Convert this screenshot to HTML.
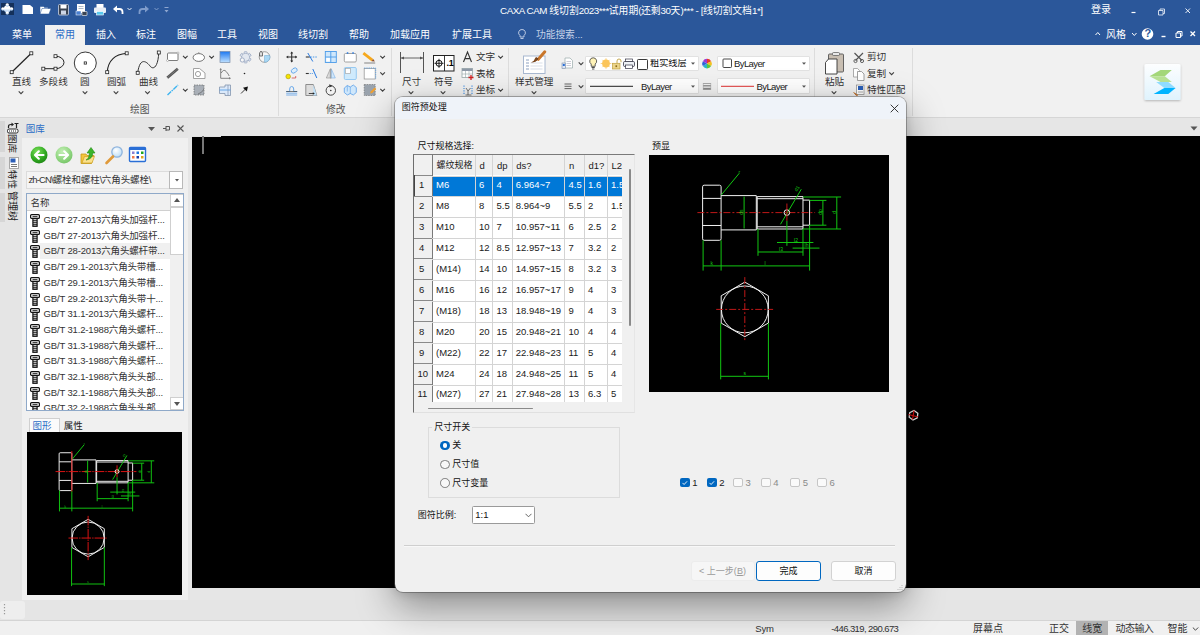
<!DOCTYPE html>
<html lang="zh-CN">
<head>
<meta charset="utf-8">
<title>CAXA CAM 线切割2023</title>
<style>
*{box-sizing:border-box;margin:0;padding:0}
html,body{width:1200px;height:635px;overflow:hidden;background:#e6e6e6}
body{font-family:"Liberation Sans","Noto Sans CJK SC",sans-serif;font-size:11px;color:#1a1a1a;position:relative}
.abs{position:absolute}
.t{position:absolute;white-space:nowrap;line-height:1}
#hdr{left:0;top:0;width:1200px;height:45px;background:#2b579a}
#hdr .t{color:#fff}
.ls{letter-spacing:-0.450px}
#hdr .tab{top:29.500px;font-size:10px}
#ribbon{left:0;top:45px;width:1200px;height:73px;background:#f1f1f1;border-bottom:1px solid #d6d6d6}
.gsep{position:absolute;top:3px;width:1px;height:68px;background:#dcdcdc}
.glabel{position:absolute;top:58px;font-size:9.800px;color:#555;line-height:1;white-space:nowrap}
.rl{position:absolute;font-size:9.600px;color:#333;line-height:1;white-space:nowrap}
.cmb{position:absolute;height:15.500px;background:#fff;border:1px solid #e2e2e2;border-radius:1px}
.chev{position:absolute;width:7px;height:4px}
#canvas{left:192px;top:136px;width:1008px;height:452px;background:#000}
#status{left:0;top:620px;width:1200px;height:15px;background:#f0f0f0;border-top:1px solid #d4d4d4}
#status .t{font-size:10px;color:#333;top:2.500px}

/* left panel */
#vtabs{left:0;top:119px;width:22px;height:481px;background:#e5e5e5}
.vt{position:absolute;left:0;width:5px;background:#d6d6d6}
.vtx{position:absolute;left:7px;width:11px;font-size:9.5px;line-height:11px;color:#222;writing-mode:vertical-rl;text-orientation:sideways;white-space:nowrap;letter-spacing:0}
#lp{left:22px;top:119px;width:166px;height:481px;background:#f0f0f0}
#lphead{left:0;top:0;width:166px;height:19px;background:#e5e5e5}
#pathbox{left:4px;top:52px;width:157px;height:18px;background:#f4f4f4;border:1px solid #dcdcdc}
#pathbtn{left:147px;top:52px;width:14px;height:18px;background:#fff;border:1px solid #b9b9b9}
#list{left:4px;top:74px;width:158px;height:218px;background:#fff;border:1px solid #8fa9c9;overflow:hidden}
#list .hd{position:absolute;left:0;top:0;width:143px;height:17px;background:#f0f0f0;border-bottom:1px solid #d0d0d0}
#list .row{position:absolute;left:0;width:143px;height:16px}
#list .row .t{left:16.500px;top:3px;font-size:9.500px;color:#333;letter-spacing:-0.150px}
#list .sb{position:absolute;left:143px;top:0;width:14px;height:216px;background:#f0f0f0}
#prev2{left:4.500px;top:313px;width:155.500px;height:162.500px;background:#000}
/* dialog */
.ct{font-size:9.500px;color:#1a1a1a}
.btn{height:19.800px;border:1px solid #d2d2d2;border-radius:3px;background:#fdfdfd;font-size:9px;line-height:18px;text-align:center;color:#111;white-space:nowrap}

#dlg{left:395px;top:96.500px;width:510.500px;height:495px;background:#f0f0f0;border-radius:8px;box-shadow:0 14px 38px rgba(0,0,0,.40),0 2px 10px rgba(0,0,0,.12),0 0 0 1px rgba(110,110,110,.5);overflow:hidden}
#dlgtitle{left:0;top:0;width:511px;height:22.500px;background:#eff3f9}
</style>
</head>
<body>
<!-- HEADER -->
<div id="hdr" class="abs">
  <!-- app icon -->
  <div class="abs" style="left:1px;top:3px;width:12.500px;height:12px;background:#14305a"></div>
  <svg class="abs" style="left:1px;top:3px" width="12.500" height="12" viewBox="0 0 12.500 12"><defs><linearGradient id="appg" x1="0" y1="0" x2="0" y2="1"><stop offset="0.400" stop-color="#ffffff"/><stop offset="1" stop-color="#9fc4ee"/></linearGradient></defs><g fill="url(#appg)"><circle cx="6.250" cy="6" r="3.400"/><circle cx="6.250" cy="2" r="1.700"/><circle cx="6.250" cy="10" r="1.700"/><circle cx="1.900" cy="6" r="1.700"/><circle cx="10.600" cy="6" r="1.700"/></g></svg>
  <!-- quick access -->
  <svg class="abs" style="left:20px;top:2px" width="160" height="16" viewBox="0 0 160 16">
    <path d="M2.500 3h7.500l3 2.500v6.500H2.500z" fill="#fff"/>
    <path d="M20 12l2-5.500h9L29 12zM20 12V4.500h3.500l1 1H28v1" fill="#fff" stroke="#2b579a" stroke-width="0.500"/>
    <rect x="38.500" y="2.500" width="10" height="10.500" rx="1" fill="#3a4352" stroke="#cdd6e6" stroke-width="0.800"/><rect x="40.500" y="3" width="6" height="3.500" fill="#fff"/><rect x="41" y="8.500" width="5" height="4" fill="#cdd6e6"/>
    <rect x="57" y="2" width="8" height="9" fill="#fff"/><path d="M58.500 4.500h5M58.500 6.500h5" stroke="#9ab" stroke-width="0.800"/><rect x="56" y="9" width="5" height="4" fill="#4a7fd0" stroke="#fff" stroke-width="0.500"/><rect x="62" y="9.500" width="5" height="4" rx="0.500" fill="#3a4352" stroke="#fff" stroke-width="0.600"/>
    <rect x="76.500" y="2" width="7" height="4" fill="#fff"/><rect x="74" y="5.500" width="12" height="5.500" rx="1" fill="#e9eef6"/><rect x="76.500" y="9.500" width="7" height="3.500" fill="#58c8ee" stroke="#fff" stroke-width="0.600"/>
    <path d="M94.500 7h5q3 0 3 3v2" fill="none" stroke="#fff" stroke-width="1.800"/><path d="M93 7l4-3.500v7z" fill="#fff"/>
    <path d="M107.500 6l2 2 2-2" fill="none" stroke="#e6ecf5" stroke-width="1"/>
    <path d="M127.500 7h-5q-3 0-3 3v2" fill="none" stroke="#7f9ccb" stroke-width="1.800"/><path d="M129 7l-4-3.500v7z" fill="#7f9ccb"/>
    <path d="M134.500 6l2 2 2-2" fill="none" stroke="#7f9ccb" stroke-width="1"/>
    <path d="M144.500 5.500h4" stroke="#8ea6d0" stroke-width="1"/><path d="M144.500 8h4l-2 2.500z" fill="#8ea6d0"/>
  </svg>
  <div class="t" id="ttl" style="left:500px;top:5.500px;font-size:9.800px"><span class="ls">CAXA CAM </span>线切割<span class="ls">2023***</span>试用期<span class="ls">(</span>还剩<span class="ls">30</span>天<span class="ls">)*** - [</span>线切割文档<span class="ls">1*]</span></div>
  <div class="t" style="left:1091px;top:5px;font-size:10px">登录</div>
  <svg class="abs" style="left:1125px;top:4px" width="75" height="14" viewBox="0 0 75 14">
    <path d="M6.500 8.500h4" stroke="#fff" stroke-width="1.200"/>
    <path d="M33.500 6.500h4.500v4.500h-4.500zM35 6.500v-1.500h4.500v4.500h-1.500" fill="none" stroke="#dfe7f3" stroke-width="0.900"/>
    <path d="M60.500 4.500l4.500 4.500M65 4.500l-4.500 4.500" stroke="#e8eef7" stroke-width="1"/>
  </svg>
  <!-- tabs -->
  <div class="abs" style="left:45px;top:25px;width:40px;height:21px;background:#f1f1f1"></div>
  <div class="t tab" style="left:55px;color:#2a6cc6">常用</div>
  <div class="t tab" style="left:12px">菜单</div><div class="t tab" style="left:96px">插入</div><div class="t tab" style="left:136px">标注</div><div class="t tab" style="left:177px">图幅</div><div class="t tab" style="left:217px">工具</div><div class="t tab" style="left:258px">视图</div><div class="t tab" style="left:298px">线切割</div><div class="t tab" style="left:349px">帮助</div><div class="t tab" style="left:390px">加载应用</div><div class="t tab" style="left:452px">扩展工具</div>
  <svg class="abs" style="left:517px;top:28px" width="10" height="13" viewBox="0 0 10 13"><path d="M5 1.500a3.300 3.300 0 0 1 2 6v1.500H3V7.500a3.300 3.300 0 0 1 2-6zM3.500 10.500h3" fill="none" stroke="#c9d5ea" stroke-width="0.900"/></svg>
  <div class="t tab" style="left:536px;color:#c5d2e8;font-size:9.800px;letter-spacing:-0.100px">功能搜索...</div>
  <svg class="abs" style="left:1093px;top:26px" width="107" height="16" viewBox="0 0 107 16">
    <path d="M2.500 9l2.300-2.500L7 9" fill="none" stroke="#fff" stroke-width="1"/>
    <path d="M39 7l2.300 2.500L43.500 7" fill="none" stroke="#fff" stroke-width="1"/>
    <circle cx="54.500" cy="8" r="5.800" fill="#fff"/>
    <path d="M68.500 10.500h4" stroke="#fff" stroke-width="1.400"/>
    <path d="M83 7h4.500v4.500H83zM84.500 7V5.500H89V10h-1.500" fill="none" stroke="#fff" stroke-width="1"/>
    <path d="M97.500 5.500l4.500 4.500M102 5.500l-4.500 4.500" stroke="#fff" stroke-width="1.300"/>
  </svg>
  <div class="t" style="left:1144.500px;top:28px;font-size:11px;font-weight:bold;color:#2b579a">?</div>
  <div class="t tab" style="left:1106px">风格</div>
</div>
<!-- RIBBON -->
<div id="ribbon" class="abs">
<svg class="abs" style="left:0;top:0" width="400" height="73" viewBox="0 0 400 73"><path d="M11.700 27.2L31.300 8.3" stroke="#222" stroke-width="1.200"/><rect x="10.2" y="25.7" width="3" height="3" fill="#fff" stroke="#222" stroke-width="0.800"/><rect x="29.8" y="6.800000000000001" width="3" height="3" fill="#fff" stroke="#222" stroke-width="0.800"/><path d="M43.300 23.7H55.500M55.500 11.2a8.500 6.250 0 0 1 0 12.500" fill="none" stroke="#222" stroke-width="1"/><rect x="41.8" y="22.2" width="3" height="3" fill="#fff" stroke="#222" stroke-width="0.800"/><rect x="54.0" y="22.2" width="3" height="3" fill="#fff" stroke="#222" stroke-width="0.800"/><rect x="54.0" y="9.7" width="3" height="3" fill="#fff" stroke="#222" stroke-width="0.800"/><circle cx="85.300" cy="18" r="11" fill="#fff" stroke="#222" stroke-width="0.900"/><rect x="84.2" y="16.9" width="2.2" height="2.2" fill="#fff" stroke="#222" stroke-width="0.800"/><path d="M107.200 27.2Q108.500 10 126.700 8.3" fill="none" stroke="#222" stroke-width="1.100"/><rect x="105.7" y="25.7" width="3" height="3" fill="#fff" stroke="#222" stroke-width="0.800"/><rect x="125.2" y="6.800000000000001" width="3" height="3" fill="#fff" stroke="#222" stroke-width="0.800"/><path d="M137.700 27.8C140 11 147 17 150 21S158 23 158.800 7.5" fill="none" stroke="#333" stroke-width="1"/><rect x="136.2" y="26.3" width="3" height="3" fill="#fff" stroke="#222" stroke-width="0.800"/><rect x="157.3" y="6.0" width="3" height="3" fill="#fff" stroke="#222" stroke-width="0.800"/><path d="M18.70 46.30l2.300 2.300 2.300-2.300" fill="none" stroke="#404040" stroke-width="1.100"/><path d="M82.70 46.30l2.300 2.300 2.300-2.300" fill="none" stroke="#404040" stroke-width="1.100"/><path d="M113.70 46.30l2.300 2.300 2.300-2.300" fill="none" stroke="#404040" stroke-width="1.100"/><path d="M145.20 46.30l2.300 2.300 2.300-2.300" fill="none" stroke="#404040" stroke-width="1.100"/><rect x="167.500" y="8" width="10.500" height="7.500" rx="1" fill="#fff" stroke="#5a5a5a" stroke-width="0.800"/><circle cx="178" cy="8" r="1" fill="#fff" stroke="#888" stroke-width="0.500"/><circle cx="167.500" cy="15.5" r="1" fill="#fff" stroke="#888" stroke-width="0.500"/><path d="M183.00 10.80l2.300 2.300 2.300-2.300" fill="none" stroke="#404040" stroke-width="1.100"/><path d="M209.30 10.80l2.300 2.300 2.300-2.300" fill="none" stroke="#404040" stroke-width="1.100"/><path d="M183.00 43.80l2.300 2.300 2.300-2.300" fill="none" stroke="#404040" stroke-width="1.100"/><path d="M167.300 32.7L177.800 23.7" stroke="#555" stroke-width="2.800"/><path d="M167.300 32.7L177.800 23.7" stroke="#9a9a9a" stroke-width="1" stroke-dasharray="0.800 0.800"/><path d="M167.500 50L178 40" stroke="#3db4f0" stroke-width="1.400" stroke-dasharray="5 0.800 1.500 0.800"/><ellipse cx="198.800" cy="12.5" rx="5.700" ry="3.900" fill="#fff" stroke="#555" stroke-width="0.800"/><circle cx="198.800" cy="8" r="0.700" fill="#888"/><path d="M193.500 23.5h6l5.500 4.500v5.500h-11.500z" fill="#fff" stroke="#999" stroke-width="0.900"/><circle cx="198" cy="29.0" r="2.600" fill="none" stroke="#888" stroke-width="0.800"/><rect x="194" y="40" width="10" height="10" fill="#a9afb7" stroke="#555" stroke-width="0.600" stroke-dasharray="1.500 1"/><path d="M204 44q-2 4-6 5" fill="none" stroke="#555" stroke-width="0.600"/><defs><linearGradient id="gfill" x1="0" y1="0" x2="0" y2="1"><stop offset="0" stop-color="#1e78f0"/><stop offset="1" stop-color="#bfe1ff"/></linearGradient></defs><rect x="220" y="6.5" width="10" height="11" fill="url(#gfill)" stroke="#7a8ca8" stroke-width="0.700"/><path d="M220.700 24.0v9.300h9.300" fill="none" stroke="#777" stroke-width="0.900"/><path d="M220.700 23.0l-1.200 1.800h2.400zM231 33.3l-1.800-1.200v2.400z" fill="#777"/><path d="M221.200 28.0q2.500-4.500 5-1.500t3 4.500" fill="none" stroke="#666" stroke-width="0.800"/><path d="M219.500 42h5.500v-2h5.500v10.500h-5.500v-2h-5.500z" fill="#dbe9fa" stroke="#8494ad" stroke-width="0.800"/><path d="M219.500 45h11" stroke="#5aa0e8" stroke-width="0.900"/><path d="M228 40v10.500" stroke="#8494ad" stroke-width="0.700"/><rect x="244.20" y="6.70" width="2.800" height="3" rx="0.500" transform="rotate(0 245.6 12.3)" fill="#e3e8f0" stroke="#9aa8c2" stroke-width="0.800"/><rect x="244.20" y="6.70" width="2.800" height="3" rx="0.500" transform="rotate(60 245.6 12.3)" fill="#e3e8f0" stroke="#9aa8c2" stroke-width="0.800"/><rect x="244.20" y="6.70" width="2.800" height="3" rx="0.500" transform="rotate(120 245.6 12.3)" fill="#e3e8f0" stroke="#9aa8c2" stroke-width="0.800"/><rect x="244.20" y="6.70" width="2.800" height="3" rx="0.500" transform="rotate(180 245.6 12.3)" fill="#e3e8f0" stroke="#9aa8c2" stroke-width="0.800"/><rect x="244.20" y="6.70" width="2.800" height="3" rx="0.500" transform="rotate(300 245.6 12.3)" fill="#e3e8f0" stroke="#9aa8c2" stroke-width="0.800"/><circle cx="245.6" cy="12.3" r="3.900" fill="#e3e8f0" stroke="#9aa8c2" stroke-width="0.800"/><circle cx="245.6" cy="12.3" r="3.300" fill="#e3e8f0"/><circle cx="242.300" cy="15" r="2.100" fill="#f7f7f7" stroke="#9aa8c2" stroke-width="0.900"/><circle cx="244.500" cy="28.5" r="0.800" fill="#222"/><path d="M241 48.5L246 43.5" stroke="#222" stroke-width="0.900"/><path d="M248 41.5l-1.200 5-3.800-3.800z" fill="#111"/><circle cx="264.500" cy="12" r="5.300" fill="#f6f6f6" stroke="#888" stroke-width="0.800"/><path d="M264.500 10.5h5.300a5.300 5.300 0 0 1-5.300 6.800z" fill="#a9d8f5" stroke="#6aa6d0" stroke-width="0.500"/><path d="M259.500 8l1.500-2 1.500 2v3h-3z" fill="#ddd" stroke="#444" stroke-width="0.700"/><path d="M380.30 10.80l2.300 2.300 2.300-2.300" fill="none" stroke="#404040" stroke-width="1.100"/><path d="M380.30 27.30l2.300 2.300 2.300-2.300" fill="none" stroke="#404040" stroke-width="1.100"/><path d="M380.30 43.80l2.300 2.300 2.300-2.300" fill="none" stroke="#404040" stroke-width="1.100"/><path d="M286.7 12h10M291.7 7v10" stroke="#333" stroke-width="1.100"/><path d="M286.2 12l2-1.500v3zM297.2 12l-2-1.500v3zM291.7 6.5l-1.500 2h3zM291.7 17.5l-1.500-2h3z" fill="#333"/><path d="M305.8 12h4" stroke="#333" stroke-width="1.100"/><path d="M310.3 12h6.500" stroke="#3a8ee6" stroke-width="0.900" stroke-dasharray="1.500 1"/><path d="M307.8 8L312.8 16.5" stroke="#2a7be0" stroke-width="1"/><rect x="325.3" y="6.5" width="11" height="11" fill="#cfe7fb" stroke="#4a9ae8" stroke-width="0.900"/><path d="M330.8 6.5v11M325.3 12h11" stroke="#4a9ae8" stroke-width="0.900"/><rect x="326.3" y="13" width="3.500" height="3.500" fill="#fff"/><rect x="344.3" y="8.5" width="12" height="8.500" rx="1.200" fill="#fff" stroke="#999" stroke-width="0.900"/><path d="M346.8 8h1.500M352.3 8h1.500" stroke="#2a7be0" stroke-width="1.300"/><path d="M364.2 7l9 7-1.700 2.300-9-7z" fill="#f6a81c"/><path d="M373.2 14l1.700 2.500-3.400-0.200z" fill="#8a4a2a"/><path d="M364.2 18h11" stroke="#555" stroke-width="0.700"/><circle cx="288.2" cy="31.5" r="2.300" fill="#f5e400" stroke="#a89500" stroke-width="0.600"/><ellipse cx="294.2" cy="25.5" rx="3.200" ry="2.200" transform="rotate(-35 294.2 25.5)" fill="#dceefc" stroke="#5aa0e8" stroke-width="0.800"/><path d="M291.7 33.0h4v-2" fill="none" stroke="#c33" stroke-width="0.700"/><path d="M305.8 28.5h3" stroke="#333" stroke-width="1.100"/><path d="M309.8 28.5h3" stroke="#3a8ee6" stroke-width="0.900" stroke-dasharray="1 1"/><path d="M312.8 24.0L316.8 33.0" stroke="#2a7be0" stroke-width="1"/><path d="M330.3 24.0v9h-4z" fill="#ddd" stroke="#999" stroke-width="0.700"/><path d="M331.3 24.0v9h4z" fill="#cfe7fb" stroke="#8ab8e8" stroke-width="0.700"/><path d="M330.8 23.0v11" stroke="#888" stroke-width="0.600"/><rect x="344.3" y="22.5" width="12" height="12" rx="1.200" fill="#cfeafc" stroke="#8ec5f0" stroke-width="0.900"/><rect x="345.3" y="23.5" width="5" height="5" fill="#fff" stroke="#999" stroke-width="0.600"/><rect x="364.2" y="23.5" width="11" height="10.500" fill="#fff" stroke="#999" stroke-width="0.800"/><path d="M364.2 23.0h11.500v11" fill="none" stroke="#4a9ae8" stroke-width="0.800" stroke-dasharray="1.200 1"/><path d="M286.2 46.5h3.500v-2.500q0-2.500 2-2.500t2 2.500v2.500h3.500" fill="none" stroke="#5aa0e8" stroke-width="0.900"/><path d="M286.2 48.2h11M286.2 50h11" stroke="#5aa0e8" stroke-width="0.800"/><path d="M286.2 46.5h11" stroke="#444" stroke-width="0.700"/><path d="M305.8 39.5h7.500l3.500 11h-11z" fill="#ddd" stroke="#777" stroke-width="0.800"/><path d="M313.3 39.5l3.500 11h-3.500z" fill="#bfe1fa"/><path d="M308.8 48.5h5" stroke="#222" stroke-width="0.800"/><path d="M314.8 48.5l-2-1.200v2.400z" fill="#222"/><circle cx="330.8" cy="45.5" r="4.700" fill="none" stroke="#333" stroke-width="0.900"/><circle cx="330.8" cy="45.5" r="0.800" fill="#333"/><path d="M329.3 39.2l3.200 1.600-3 1.800z" fill="#333"/><path d="M344.3 43l3-2.500 3 1.500 3-2 3 2.500v5l-3 2.500-3-1.500-3 1.500-3-2.500z" fill="#cfe7fb" stroke="#5aa0e8" stroke-width="0.800"/><path d="M350.3 42v7M347.3 40.5v6" stroke="#5aa0e8" stroke-width="0.600"/><rect x="364.2" y="39.5" width="11" height="11" fill="#9aa3ad" stroke="#666" stroke-width="0.600" stroke-dasharray="1.500 1"/><path d="M370.7 46.5l4-4 1.500 1.500-4 4-2 0.500z" fill="#f0a030"/></svg>
<div class="rl" style="left:12px;top:32px">直线</div><div class="rl" style="left:39px;top:32px">多段线</div><div class="rl" style="left:80px;top:32px">圆</div><div class="rl" style="left:107px;top:32px">圆弧</div><div class="rl" style="left:139px;top:32px">曲线</div>
<div class="rl" style="left:446.500px;top:13.500px;font-size:9px;font-weight:bold;color:#000;letter-spacing:-0.3px;z-index:3">.1</div>
<div class="glabel" style="left:130px;top:59.500px">绘图</div>
<div class="glabel" style="left:326px;top:59.500px">修改</div>
<div class="gsep" style="left:278px"></div>
<div class="gsep" style="left:391px"></div>
<div class="gsep" style="left:508px"></div>
<div class="gsep" style="left:814px"></div>
<div class="gsep" style="left:912px"></div>

<div class="cmb" style="left:585px;top:10.500px;width:114px"></div>
<div class="cmb" style="left:585px;top:33px;width:114px"></div>
<div class="cmb" style="left:716.500px;top:10.500px;width:93px"></div>
<div class="cmb" style="left:716.500px;top:33px;width:93px"></div>
<div class="rl" style="left:650px;top:13.500px;font-size:9.200px;color:#111;width:36.500px;overflow:hidden">粗实线层</div>
<div class="rl" style="left:641px;top:37px;font-size:9.500px;color:#222;letter-spacing:-0.600px">ByLayer</div>
<div class="rl" style="left:734px;top:14px;font-size:9.500px;color:#222;letter-spacing:-0.600px">ByLayer</div>
<div class="rl" style="left:756.500px;top:37px;font-size:9.500px;color:#222;letter-spacing:-0.600px">ByLayer</div>
<svg class="abs" style="left:0;top:0" width="1200" height="73" viewBox="0 0 1200 73"><path d="M400.500 7v21M423.500 7v21" stroke="#555" stroke-width="1"/><path d="M401 13h22" stroke="#555" stroke-width="0.900"/><path d="M401 13l3-1.500v3zM423 13l-3-1.500v3z" fill="#555"/><path d="M408.70 46.30l2.300 2.300 2.300-2.300" fill="none" stroke="#404040" stroke-width="1.100"/><path d="M440.70 46.30l2.300 2.300 2.300-2.300" fill="none" stroke="#404040" stroke-width="1.100"/><path d="M531.70 46.30l2.300 2.300 2.300-2.300" fill="none" stroke="#404040" stroke-width="1.100"/><path d="M831.70 46.30l2.300 2.300 2.300-2.300" fill="none" stroke="#404040" stroke-width="1.100"/><rect x="433.500" y="10.5" width="20.500" height="15.500" fill="#fff" stroke="#222" stroke-width="1"/><path d="M444.500 10.5v15.500" stroke="#222" stroke-width="0.900"/><circle cx="439" cy="18.3" r="3" fill="none" stroke="#111" stroke-width="1"/><path d="M434.500 18.3h9M439 13.8v9" stroke="#111" stroke-width="0.900"/><path d="M463.500 17l4-10 4 10M465 13.6h5" fill="none" stroke="#333" stroke-width="1.100"/><path d="M498.30 10.80l2.300 2.300 2.300-2.300" fill="none" stroke="#404040" stroke-width="1.100"/><path d="M498.30 43.80l2.300 2.300 2.300-2.300" fill="none" stroke="#404040" stroke-width="1.100"/><path d="M889.30 27.30l2.300 2.300 2.300-2.300" fill="none" stroke="#404040" stroke-width="1.100"/><rect x="462" y="23.5" width="10.500" height="9" fill="#fff" stroke="#9aa" stroke-width="0.800"/><rect x="462" y="23.5" width="10.500" height="2.500" fill="#8e99a8"/><path d="M465.500 26v6.500M469 26v6.500M462 29h10.500" stroke="#9aa" stroke-width="0.600"/><path d="M468.500 32.5h5M471 30v5" stroke="#d02020" stroke-width="1.300"/><path d="M464 40.5v9.500M472 40.5v9.500" stroke="#3a8ee6" stroke-width="1.100" stroke-dasharray="1.200 1.200"/><path d="M466 43l2 3 2.500-3M468 46v4M465.500 50h6" fill="none" stroke="#555" stroke-width="0.800"/><rect x="523.500" y="11" width="21.500" height="17.500" fill="#fff" stroke="#a8b8d0" stroke-width="1"/><path d="M526 15h3M526 18h3M526 21h3M526 24h3" stroke="#7f95b8" stroke-width="0.900"/><path d="M530.500 18h12M530.500 21h12M530.500 24h12" stroke="#d5dbe6" stroke-width="0.900"/><path d="M544.800 6.8l-6.500 7.500" stroke="#c9762a" stroke-width="3" stroke-linecap="round"/><path d="M538.500 13.5q-2 3.500-6 3.500 3-1 3.500-5z" fill="#6a3a18"/><path d="M531 17.5q4 0.500 7-3.500l-2.500-1.500q-1 3.500-4.500 5z" fill="#7a4820"/><path d="M565 13h5l2.500 2.500v7.500h-7.500z" fill="#fff" stroke="#9aa" stroke-width="0.700"/><path d="M566.500 16.5h4.500M566.500 18.5h4.500M566.500 20.5h4.500" stroke="#aab" stroke-width="0.600"/><rect x="562" y="18" width="3.500" height="5.500" fill="#dde6f5" stroke="#7a8ca8" stroke-width="0.600"/><rect x="562.800" y="19" width="2" height="2" fill="#2a6fd6"/><path d="M578.70 17.30l2.300 2.300 2.300-2.300" fill="none" stroke="#404040" stroke-width="1.100"/><path d="M578.70 40.30l2.300 2.300 2.300-2.300" fill="none" stroke="#404040" stroke-width="1.100"/><path d="M564.500 39h7M564.500 41.3h7M564.500 43.6h7" stroke="#555" stroke-width="0.900"/><path d="M593.200 12.8a3.400 3.400 0 0 1 2 6.200v2.300h-4v-2.300a3.400 3.400 0 0 1 2-6.200z" fill="#fff3b8" stroke="#3a3a3a" stroke-width="0.800"/><path d="M591.600 22.5h3.200M592 24h2.400" stroke="#3a3a3a" stroke-width="0.900"/><path d="M606 13.2v10.600M600.700 18.5h10.600M602.300 14.8l7.400 7.400M609.700 14.8l-7.400 7.400" stroke="#fbd07a" stroke-width="0.900"/><circle cx="606" cy="18.5" r="3.900" fill="#fbc55a"/><rect x="612.500" y="18.3" width="7.500" height="5.700" fill="#ecd58a" stroke="#c0a040" stroke-width="0.700"/><path d="M617 18.3v-2.300q0-2 2-2t2 2v1.300" fill="none" stroke="#c0a040" stroke-width="0.900"/><rect x="615.500" y="20.3" width="1.600" height="1.800" fill="#8a6a1a"/><rect x="625.500" y="14" width="7" height="3" fill="#fff" stroke="#334" stroke-width="0.700"/><rect x="623.500" y="16.5" width="11" height="5" rx="1.200" fill="#eef1f5" stroke="#334" stroke-width="0.800"/><rect x="625.500" y="20" width="7" height="3.500" fill="#fff" stroke="#334" stroke-width="0.700"/><rect x="637.500" y="14.5" width="10" height="10" rx="0.800" fill="#fff" stroke="#222" stroke-width="0.900"/><path d="M691 17.5h4l-2 2.200z" fill="#555"/><path d="M691 40.5h4l-2 2.200z" fill="#555"/><path d="M802 17.5h4l-2 2.200z" fill="#555"/><path d="M802 40.5h4l-2 2.200z" fill="#555"/><path d="M590 41.3h43" stroke="#222" stroke-width="1"/><path d="M707 18.6L707.00 13.80A4.8 4.8 0 0 1 711.16 16.20z" fill="#e8392f"/><path d="M707 18.6L711.16 16.20A4.8 4.8 0 0 1 711.16 21.00z" fill="#f5c11e"/><path d="M707 18.6L711.16 21.00A4.8 4.8 0 0 1 707.00 23.40z" fill="#5cc63a"/><path d="M707 18.6L707.00 23.40A4.8 4.8 0 0 1 702.84 21.00z" fill="#29b6c8"/><path d="M707 18.6L702.84 21.00A4.8 4.8 0 0 1 702.84 16.20z" fill="#2f62d8"/><path d="M707 18.6L702.84 16.20A4.8 4.8 0 0 1 707.00 13.80z" fill="#a03ad0"/><path d="M703 38.5h8" stroke="#888" stroke-width="0.700"/><path d="M703 40.8h8" stroke="#888" stroke-width="1.300"/><path d="M703 43.8h8" stroke="#888" stroke-width="2"/><path d="M703.300 38v7M710.700 38v7" stroke="#aaa" stroke-width="0.600"/><rect x="723" y="14" width="8.500" height="8.500" rx="0.800" fill="#fff" stroke="#333" stroke-width="0.900"/><path d="M721 41.3h33" stroke="#e03030" stroke-width="1"/><rect x="828.500" y="9" width="15" height="18" rx="1" fill="#c8beb2" stroke="#555" stroke-width="0.900"/><rect x="832.500" y="7.5" width="7" height="3" rx="1" fill="#e8e8e8" stroke="#555" stroke-width="0.700"/><path d="M825.500 17.5l3-3.500h8.500v15h-11.500z" fill="#fff" stroke="#333" stroke-width="0.900"/><path d="M854.500 8l7.500 7.500M863 8l-7.500 7.500" stroke="#555" stroke-width="1.200"/><circle cx="855.500" cy="16" r="1.600" fill="none" stroke="#555" stroke-width="0.900"/><circle cx="862" cy="16" r="1.600" fill="none" stroke="#555" stroke-width="0.900"/><path d="M853.500 23.5h4l2 2v6.500h-6z" fill="#fff" stroke="#999" stroke-width="0.800"/><path d="M857.500 26.5h4l2.500 2.500v6.500h-6.500z" fill="#fff" stroke="#888" stroke-width="0.800"/><rect x="856.500" y="40" width="7.500" height="9.500" fill="#fff" stroke="#888" stroke-width="0.700"/><rect x="858" y="41" width="5" height="4" fill="#2a5fb8"/><path d="M858 47h5" stroke="#888" stroke-width="0.700"/><path d="M853.500 47.5l4 2-1 1.500z" fill="#a0501a"/><path d="M853.500 47.5l4.500 3" stroke="#c87a30" stroke-width="1"/><defs><linearGradient id="lgbg" x1="0" y1="0" x2="0" y2="1"><stop offset="0" stop-color="#fdfeff"/><stop offset="1" stop-color="#dff3fd"/></linearGradient><filter id="lgsh" x="-20%" y="-20%" width="140%" height="150%"><feDropShadow dx="0" dy="1" stdDeviation="1" flood-color="#000" flood-opacity="0.250"/></filter></defs>
<rect x="1144.500" y="19" width="36" height="36" rx="1.500" fill="url(#lgbg)" filter="url(#lgsh)"/>
<path d="M1149.600 31.2L1160.500 25H1171.800L1164.800 31.2z" fill="#a3d779"/>
<path d="M1149.600 31.2H1164.800L1171.800 37H1160.500z" fill="#b7e193"/>
<path d="M1156.200 37H1168.300L1175.600 43H1164.300z" fill="#8fdcff"/>
<path d="M1164.300 43H1175.600L1168.300 49H1153.600z" fill="#00b4ff"/></svg><div class="rl" style="left:402px;top:32.3px">尺寸</div><div class="rl" style="left:434px;top:32.3px">符号</div><div class="rl" style="left:515px;top:32.3px">样式管理</div><div class="rl" style="left:825px;top:32.3px">粘贴</div><div class="rl" style="left:476px;top:7px">文字</div><div class="rl" style="left:476px;top:23.5px">表格</div><div class="rl" style="left:476px;top:40px">坐标</div><div class="rl" style="left:867px;top:7px">剪切</div><div class="rl" style="left:867px;top:23.5px">复制</div><div class="rl" style="left:867px;top:40px">特性匹配</div>
</div>
<!-- LEFT PANEL -->
<div id="vtabs" class="abs">
  <div class="vt" style="top:2px;height:31px"></div>
  <div class="vt" style="top:38px;height:32px"></div>
  <div class="vt" style="top:74px;height:29px"></div>
  <svg class="abs" style="left:7px;top:3px" width="12" height="12" viewBox="0 0 12 12"><path d="M1.500 6V4.500q0-2 2.500-2h1" fill="none" stroke="#222" stroke-width="1.200"/><path d="M4.500 0.500l2.500 2-2.500 2z" fill="#222"/><path d="M7.500 1.500h4M9.500 1.500v4.500" stroke="#222" stroke-width="1.200"/><rect x="0.500" y="7" width="10.500" height="4" rx="1.500" fill="#fff" stroke="#222"/><path d="M2 9h8" stroke="#222" stroke-width="1.200" stroke-dasharray="1 1"/></svg>
  <div class="vtx" style="top:15px">图库</div>
  <svg class="abs" style="left:9px;top:38px" width="10" height="12" viewBox="0 0 10 12"><rect x="0.500" y="0.500" width="9" height="11" fill="#fff" stroke="#a8a8a8"/><rect x="1.500" y="1.500" width="5" height="4" fill="#2c5fb8"/><path d="M2 7.500h6M2 9.500h6" stroke="#777"/></svg>
  <div class="vtx" style="top:51px">特性</div>
  <div class="vtx" style="top:72px;font-size:10px">管理树</div>
</div>
<div id="lp" class="abs">
  <div id="lphead" class="abs">
    <div class="t" style="left:3.700px;top:5px;font-size:9.500px;color:#2a6cc6">图库</div>
    <svg class="abs" style="left:126px;top:8px" width="7" height="4" viewBox="0 0 7 4"><path d="M0 0h7L3.5 4z" fill="#555"/></svg>
    <svg class="abs" style="left:141px;top:6px" width="7" height="7" viewBox="0 0 7 7"><path d="M0 3.5h3M3 1v5M3 1.5h3.5v3.5H3" fill="none" stroke="#555" stroke-width="1"/></svg>
    <svg class="abs" style="left:155px;top:6px" width="7" height="7" viewBox="0 0 7 7"><path d="M0.5 0.5l6 6M6.5 0.5l-6 6" stroke="#555" stroke-width="1.1"/></svg>
  </div>
  <!-- toolbar icons -->
  <svg class="abs" style="left:6px;top:25px" width="140" height="22" viewBox="0 0 140 22">
    <defs>
      <radialGradient id="gb" cx="0.4" cy="0.3" r="0.8"><stop offset="0" stop-color="#7be05a"/><stop offset="0.6" stop-color="#2fa81f"/><stop offset="1" stop-color="#1a7d12"/></radialGradient>
      <radialGradient id="gf" cx="0.4" cy="0.3" r="0.8"><stop offset="0" stop-color="#c4efb6"/><stop offset="0.6" stop-color="#8fd57f"/><stop offset="1" stop-color="#6fbf62"/></radialGradient>
      <radialGradient id="gl" cx="0.4" cy="0.35" r="0.7"><stop offset="0" stop-color="#fff"/><stop offset="1" stop-color="#b9dcf7"/></radialGradient>
    </defs>
    <circle cx="11" cy="11" r="8.5" fill="url(#gb)"/>
    <path d="M15.5 11H7.5M10.8 7.3L7 11l3.8 3.7" fill="none" stroke="#fff" stroke-width="2.2" stroke-linecap="round" stroke-linejoin="round"/>
    <circle cx="36" cy="11" r="8.5" fill="url(#gf)"/>
    <path d="M31.5 11h8M36.2 7.3L40 11l-3.8 3.700" fill="none" stroke="#fff" stroke-width="2.2" stroke-linecap="round" stroke-linejoin="round"/>
    <path d="M53 10h5l1 1.500h7l-2.500 8H53z" fill="#f3c53c" stroke="#c89a1a" stroke-width="0.8"/>
    <path d="M54 19l2.500-6.500h10L64 19z" fill="#fbe08a" stroke="#c89a1a" stroke-width="0.6"/>
    <path d="M58 16q3-1 3.500-7H59l4-5.500L67 9h-2.300q0 6-6.700 7z" fill="#3cb52a" stroke="#1f8a16" stroke-width="0.6"/>
    <circle cx="89" cy="8" r="5.200" fill="url(#gl)" stroke="#8fb4dd" stroke-width="1.300"/>
    <path d="M85 12.500l-6.500 6.500" stroke="#e09a3a" stroke-width="2.600" stroke-linecap="round"/>
    <rect x="101.500" y="3.500" width="16" height="14" rx="1" fill="#fff" stroke="#2a6fd6" stroke-width="1.400"/>
    <rect x="101.500" y="3.500" width="16" height="2.500" fill="#2a6fd6"/>
    <rect x="104" y="7.500" width="2.500" height="2.500" fill="#8a7fd0"/><rect x="108.500" y="7.500" width="2.500" height="2.500" fill="#1e78e0"/><rect x="113" y="7.500" width="2.500" height="2.500" fill="#1fa51f"/>
    <rect x="104" y="12" width="2.500" height="2.500" fill="#f07a4a"/><rect x="108.500" y="12" width="2.500" height="2.500" fill="#1a3fa8"/><rect x="113" y="12" width="2.500" height="2.500" fill="#e0a520"/>
  </svg>
  <div id="pathbox" class="abs"><div class="t" id="ptxt" style="left:1.500px;top:2.500px;font-size:9.500px;color:#333"><span style="letter-spacing:-0.900px">zh-CN\</span><span style="letter-spacing:-0.100px">螺栓和螺柱</span><span style="letter-spacing:-0.500px">\</span><span style="letter-spacing:-0.100px">六角头螺栓</span><span>\</span></div></div>
  <div id="pathbtn" class="abs"><svg class="abs" style="left:4.500px;top:7px" width="4" height="3" viewBox="0 0 4 3"><path d="M0 0h4L2 2.500z" fill="#555"/></svg></div>
  <div id="list" class="abs">
    <div class="hd"><div class="t" style="left:3.500px;top:4px;font-size:9.500px;color:#333">名称</div></div>
    <div class="row" style="top:18.0px"><svg class="abs" style="left:3px;top:2px" width="10" height="13" viewBox="0 0 10 13"><rect x="0.600" y="0.600" width="8.800" height="3.800" rx="1" fill="#fff" stroke="#111" stroke-width="1.200"/><path d="M2.500 2.500h5" stroke="#111" stroke-width="0.800"/><rect x="2.900" y="4.500" width="4.200" height="7.800" fill="#ddd" stroke="#111" stroke-width="1.200"/><path d="M3 6.700h4M3 8.700h4M3 10.700h4" stroke="#111" stroke-width="0.900"/></svg><div class="abs" style="left:13px;top:0;width:130px;height:16px"></div><div class="t">GB/T 27-2013六角头加强杆...</div></div>
<div class="row" style="top:33.7px"><svg class="abs" style="left:3px;top:2px" width="10" height="13" viewBox="0 0 10 13"><rect x="0.600" y="0.600" width="8.800" height="3.800" rx="1" fill="#fff" stroke="#111" stroke-width="1.200"/><path d="M2.500 2.500h5" stroke="#111" stroke-width="0.800"/><rect x="2.900" y="4.500" width="4.200" height="7.800" fill="#ddd" stroke="#111" stroke-width="1.200"/><path d="M3 6.700h4M3 8.700h4M3 10.700h4" stroke="#111" stroke-width="0.900"/></svg><div class="abs" style="left:13px;top:0;width:130px;height:16px"></div><div class="t">GB/T 27-2013六角头加强杆...</div></div>
<div class="row" style="top:49.4px"><svg class="abs" style="left:3px;top:2px" width="10" height="13" viewBox="0 0 10 13"><rect x="0.600" y="0.600" width="8.800" height="3.800" rx="1" fill="#fff" stroke="#111" stroke-width="1.200"/><path d="M2.500 2.500h5" stroke="#111" stroke-width="0.800"/><rect x="2.900" y="4.500" width="4.200" height="7.800" fill="#ddd" stroke="#111" stroke-width="1.200"/><path d="M3 6.700h4M3 8.700h4M3 10.700h4" stroke="#111" stroke-width="0.900"/></svg><div class="abs" style="left:13px;top:0;width:130px;height:16px;background:#f0f0f0"></div><div class="t">GB/T 28-2013六角头螺杆带...</div></div>
<div class="row" style="top:65.1px"><svg class="abs" style="left:3px;top:2px" width="10" height="13" viewBox="0 0 10 13"><rect x="0.600" y="0.600" width="8.800" height="3.800" rx="1" fill="#fff" stroke="#111" stroke-width="1.200"/><path d="M2.500 2.500h5" stroke="#111" stroke-width="0.800"/><rect x="2.900" y="4.500" width="4.200" height="7.800" fill="#ddd" stroke="#111" stroke-width="1.200"/><path d="M3 6.700h4M3 8.700h4M3 10.700h4" stroke="#111" stroke-width="0.900"/></svg><div class="abs" style="left:13px;top:0;width:130px;height:16px"></div><div class="t">GB/T 29.1-2013六角头带槽...</div></div>
<div class="row" style="top:80.8px"><svg class="abs" style="left:3px;top:2px" width="10" height="13" viewBox="0 0 10 13"><rect x="0.600" y="0.600" width="8.800" height="3.800" rx="1" fill="#fff" stroke="#111" stroke-width="1.200"/><path d="M2.500 2.500h5" stroke="#111" stroke-width="0.800"/><rect x="2.900" y="4.500" width="4.200" height="7.800" fill="#ddd" stroke="#111" stroke-width="1.200"/><path d="M3 6.700h4M3 8.700h4M3 10.700h4" stroke="#111" stroke-width="0.900"/></svg><div class="abs" style="left:13px;top:0;width:130px;height:16px"></div><div class="t">GB/T 29.1-2013六角头带槽...</div></div>
<div class="row" style="top:96.5px"><svg class="abs" style="left:3px;top:2px" width="10" height="13" viewBox="0 0 10 13"><rect x="0.600" y="0.600" width="8.800" height="3.800" rx="1" fill="#fff" stroke="#111" stroke-width="1.200"/><path d="M2.500 2.500h5" stroke="#111" stroke-width="0.800"/><rect x="2.900" y="4.500" width="4.200" height="7.800" fill="#ddd" stroke="#111" stroke-width="1.200"/><path d="M3 6.700h4M3 8.700h4M3 10.700h4" stroke="#111" stroke-width="0.900"/></svg><div class="abs" style="left:13px;top:0;width:130px;height:16px"></div><div class="t">GB/T 29.2-2013六角头带十...</div></div>
<div class="row" style="top:112.2px"><svg class="abs" style="left:3px;top:2px" width="10" height="13" viewBox="0 0 10 13"><rect x="0.600" y="0.600" width="8.800" height="3.800" rx="1" fill="#fff" stroke="#111" stroke-width="1.200"/><path d="M2.500 2.500h5" stroke="#111" stroke-width="0.800"/><rect x="2.900" y="4.500" width="4.200" height="7.800" fill="#ddd" stroke="#111" stroke-width="1.200"/><path d="M3 6.700h4M3 8.700h4M3 10.700h4" stroke="#111" stroke-width="0.900"/></svg><div class="abs" style="left:13px;top:0;width:130px;height:16px"></div><div class="t">GB/T 31.1-2013六角头螺杆...</div></div>
<div class="row" style="top:127.9px"><svg class="abs" style="left:3px;top:2px" width="10" height="13" viewBox="0 0 10 13"><rect x="0.600" y="0.600" width="8.800" height="3.800" rx="1" fill="#fff" stroke="#111" stroke-width="1.200"/><path d="M2.500 2.500h5" stroke="#111" stroke-width="0.800"/><rect x="2.900" y="4.500" width="4.200" height="7.800" fill="#ddd" stroke="#111" stroke-width="1.200"/><path d="M3 6.700h4M3 8.700h4M3 10.700h4" stroke="#111" stroke-width="0.900"/></svg><div class="abs" style="left:13px;top:0;width:130px;height:16px"></div><div class="t">GB/T 31.2-1988六角头螺杆...</div></div>
<div class="row" style="top:143.6px"><svg class="abs" style="left:3px;top:2px" width="10" height="13" viewBox="0 0 10 13"><rect x="0.600" y="0.600" width="8.800" height="3.800" rx="1" fill="#fff" stroke="#111" stroke-width="1.200"/><path d="M2.500 2.500h5" stroke="#111" stroke-width="0.800"/><rect x="2.900" y="4.500" width="4.200" height="7.800" fill="#ddd" stroke="#111" stroke-width="1.200"/><path d="M3 6.700h4M3 8.700h4M3 10.700h4" stroke="#111" stroke-width="0.900"/></svg><div class="abs" style="left:13px;top:0;width:130px;height:16px"></div><div class="t">GB/T 31.3-1988六角头螺杆...</div></div>
<div class="row" style="top:159.3px"><svg class="abs" style="left:3px;top:2px" width="10" height="13" viewBox="0 0 10 13"><rect x="0.600" y="0.600" width="8.800" height="3.800" rx="1" fill="#fff" stroke="#111" stroke-width="1.200"/><path d="M2.500 2.500h5" stroke="#111" stroke-width="0.800"/><rect x="2.900" y="4.500" width="4.200" height="7.800" fill="#ddd" stroke="#111" stroke-width="1.200"/><path d="M3 6.700h4M3 8.700h4M3 10.700h4" stroke="#111" stroke-width="0.900"/></svg><div class="abs" style="left:13px;top:0;width:130px;height:16px"></div><div class="t">GB/T 31.3-1988六角头螺杆...</div></div>
<div class="row" style="top:175.0px"><svg class="abs" style="left:3px;top:2px" width="10" height="13" viewBox="0 0 10 13"><rect x="0.600" y="0.600" width="8.800" height="3.800" rx="1" fill="#fff" stroke="#111" stroke-width="1.200"/><path d="M2.500 2.500h5" stroke="#111" stroke-width="0.800"/><rect x="2.900" y="4.500" width="4.200" height="7.800" fill="#ddd" stroke="#111" stroke-width="1.200"/><path d="M3 6.700h4M3 8.700h4M3 10.700h4" stroke="#111" stroke-width="0.900"/></svg><div class="abs" style="left:13px;top:0;width:130px;height:16px"></div><div class="t">GB/T 32.1-1988六角头头部...</div></div>
<div class="row" style="top:190.7px"><svg class="abs" style="left:3px;top:2px" width="10" height="13" viewBox="0 0 10 13"><rect x="0.600" y="0.600" width="8.800" height="3.800" rx="1" fill="#fff" stroke="#111" stroke-width="1.200"/><path d="M2.500 2.500h5" stroke="#111" stroke-width="0.800"/><rect x="2.900" y="4.500" width="4.200" height="7.800" fill="#ddd" stroke="#111" stroke-width="1.200"/><path d="M3 6.700h4M3 8.700h4M3 10.700h4" stroke="#111" stroke-width="0.900"/></svg><div class="abs" style="left:13px;top:0;width:130px;height:16px"></div><div class="t">GB/T 32.1-1988六角头头部...</div></div>
<div class="row" style="top:206.4px"><svg class="abs" style="left:3px;top:2px" width="10" height="13" viewBox="0 0 10 13"><rect x="0.600" y="0.600" width="8.800" height="3.800" rx="1" fill="#fff" stroke="#111" stroke-width="1.200"/><path d="M2.500 2.500h5" stroke="#111" stroke-width="0.800"/><rect x="2.900" y="4.500" width="4.200" height="7.800" fill="#ddd" stroke="#111" stroke-width="1.200"/><path d="M3 6.700h4M3 8.700h4M3 10.700h4" stroke="#111" stroke-width="0.900"/></svg><div class="abs" style="left:13px;top:0;width:130px;height:16px"></div><div class="t">GB/T 32.2-1988六角头头部...</div></div>

    <div class="sb">
      <div class="abs" style="left:0;top:0;width:14px;height:13px;background:#fff;border:1px solid #cfcfcf"></div>
      <svg class="abs" style="left:4px;top:4px" width="6" height="4" viewBox="0 0 6 4"><path d="M0 4h6L3 0z" fill="#555"/></svg>
      <div class="abs" style="left:0;top:13px;width:14px;height:48px;background:#fff;border:1px solid #cfcfcf"></div>
      <div class="abs" style="left:0;top:203px;width:14px;height:13px;background:#fff;border:1px solid #cfcfcf"></div>
      <svg class="abs" style="left:4px;top:208px" width="6" height="4" viewBox="0 0 6 4"><path d="M0 0h6L3 4z" fill="#555"/></svg>
    </div>
  </div>
  <div class="abs" style="left:6.500px;top:298.500px;width:31px;height:14.500px;border:1px solid #d0d0d0;border-bottom:none;background:#fbfbfb"></div>
  <div class="t" style="left:10.600px;top:301.500px;font-size:9.500px;color:#2a6cc6">图形</div>
  <div class="t" style="left:41.700px;top:301.500px;font-size:9.500px;color:#222">属性</div>
  <div id="prev2" class="abs"><svg class="abs" style="left:0;top:0" width="155" height="163" viewBox="649.400 154.200 239.300 237.300" preserveAspectRatio="xMidYMid slice"><path d="M704.500 184.400H720q1.500 0 1.500 1.500V238q0 1.500-1.500 1.500H704.500q-1.500 0-1.500-1.500V186q0-1.600 1.500-1.600zM703 197.600H721.500M703 224.700H721.500" fill="none" stroke="#f2f2f2" stroke-width="1.4"/><path d="M721.500 194.800H756.700V229.100H721.500" fill="none" stroke="#f2f2f2" stroke-width="1.4"/><path d="M757.600 195.800H803.400V228.200H757.600zM757.600 197.900H803.400M757.600 226H803.400M803.400 199.300H810V224.400H803.400" fill="none" stroke="#f2f2f2" stroke-width="1.4"/><path d="M697.800 211.800H815.500" stroke="#e01414" stroke-width="1.4" stroke-dasharray="14 1.500 2 1.500"/><path d="M721.500 194.400L739.400 172.800M780.900 223.500L801.700 188.400M744.500 195.800V227.700M803.400 196.200H841.500M803.400 228.200H841.500M810 199.600H826.800M810 224.400H826.800M823.300 199.600V224.400M837.200 196.200V228.200M703.500 239.500V269.800M721.500 239.500V269.800M810 224.400V269.800M703.500 265.100H810M758.400 228.200V255M803.400 228.200V255M758.400 251.200H803.400M787.300 220V245M777.400 241.700H813.800M793 247.300H819.900" fill="none" stroke="#12c812" stroke-width="1.4"/><g fill="#12c812" style="font-family:&quot;Liberation Sans&quot;,sans-serif;font-size:4.2px"><text x="738.8" y="173">r</text><text x="711" y="264.3">k</text><text x="765" y="264.3">l</text><text x="779.5" y="250.4">l3</text><text x="794.5" y="240.9">l2</text><text x="805" y="246.6">lh</text><text x="744" y="374.7">s</text><text x="743.3" y="214" transform="rotate(-90 743.3 214)">ds</text><text x="822.2" y="214" transform="rotate(-90 822.2 214)">dp</text><text x="836" y="213" transform="rotate(-90 836 213)">d</text><text x="797.5" y="191" transform="rotate(-58 797.5 191)">d1</text></g><circle cx="787.300" cy="211.800" r="2.800" fill="none" stroke="#f2f2f2" stroke-width="1.4"/><path d="M787.300 202.700V220" stroke="#e01414" stroke-width="1.4"/><polygon points="745.2,281.3 768.8,295.0 768.8,322.2 745.2,335.9 721.6,322.3 721.6,295.0" fill="none" stroke="#f2f2f2" stroke-width="1.4"/><circle cx="745.2" cy="308.6" r="23.400" fill="none" stroke="#f2f2f2" stroke-width="1.4"/><path d="M716.600 308.6H773.500M745.2 276.300V340.700" stroke="#e01414" stroke-width="1.4" stroke-dasharray="14 1.500 2 1.500"/><path d="M721.100 322.300V378.600M768.800 322.300V378.600M721.100 375.500H768.800" fill="none" stroke="#12c812" stroke-width="1.4"/><path d="M721.500 182V241" stroke="#e01414" stroke-width="1.400"/></svg></div>
</div>
<div class="abs" style="left:0;top:600px;width:1200px;height:20px;background:#e5e5e5"></div>
<div class="abs" style="left:0;top:601px;width:25px;height:18px;background:#eeeeee;border-radius:3px"></div>
<svg class="abs" style="left:3px;top:604px" width="3" height="12" viewBox="0 0 3 12"><path d="M1.500 0v12" stroke="#999" stroke-width="1.200" stroke-dasharray="1.200 1.800"/></svg>
<!-- CANVAS -->
<div id="canvas" class="abs"></div>
<div class="abs" style="left:192px;top:136px;width:29px;height:1px;background:#e0e0e0"></div>
<div class="abs" style="left:202px;top:136px;width:2px;height:18px;background:#777"></div>
<svg class="abs" style="left:1190px;top:126px" width="8" height="5" viewBox="0 0 8 5"><path d="M0.500 0.500h7L4 4.500z" fill="#555"/></svg>
<svg class="abs" style="left:907px;top:409px" width="13" height="13" viewBox="0 0 13 13"><polygon points="7,1.500 10.800,4.200 10.300,8.800 6,11 2.200,8.300 2.700,3.700" fill="none" stroke="#f0f0f0" stroke-width="1.300"/><path d="M1.500 5.500L11 8M7 1.500L5.500 10.500" stroke="#e01010" stroke-width="1.200"/></svg>
<!-- STATUS -->
<div id="status" class="abs">
  <div class="t" style="left:755.300px;font-size:9.500px;letter-spacing:-0.200px">Sym</div>
  <div class="t" style="left:831.200px;font-size:9.500px;letter-spacing:-0.590px">-446.319, 290.673</div>
  <div class="t" style="left:973px">屏幕点</div>
  <div class="t" style="left:1049px">正交</div>
  <div class="abs" style="left:1075.800px;top:0;width:32.200px;height:15px;background:#b2b2b2"></div>
  <div class="t" style="left:1082.300px">线宽</div>
  <div class="t" style="left:1115.600px;letter-spacing:-0.600px">动态输入</div>
  <div class="t" style="left:1167.400px">智能</div>
  <svg class="abs" style="left:1192px;top:6px" width="7" height="4" viewBox="0 0 7 4"><path d="M0.800 0.500l2.700 2.700 2.700-2.700" fill="none" stroke="#444" stroke-width="1"/></svg>
</div>
<!-- DIALOG -->
<div id="dlg" class="abs">
  <div id="dlgtitle" class="abs"></div>
  <div class="t" style="left:6.7px;top:6.5px;font-size:9px;color:#111">图符预处理</div>
  <svg class="abs" style="left:495px;top:7px" width="9" height="9" viewBox="0 0 9 9"><path d="M0.700 0.700l7.600 7.600M8.300 0.700l-7.600 7.600" stroke="#222" stroke-width="0.900"/></svg>
  <div class="t" style="left:22.5px;top:45px;font-size:9px;color:#111">尺寸规格选择:</div>
  <div class="t" style="left:257px;top:45px;font-size:9px;color:#111">预显</div>
  <!-- table frame -->
  <div class="abs" style="left:17.800px;top:57px;width:222px;height:259.700px;border-left:1px solid #6d6d6d;border-top:1px solid #7a7a7a;border-right:1px solid #e6e6e6;border-bottom:1px solid #e0e0e0;background:#f0f0f0"></div>
  <div class="abs" id="grid" style="left:18.800px;top:58px;width:208.500px;height:247.200px;background:#fff;overflow:hidden"><div class="abs" style="left:0;top:0;width:220px;height:20.3px;background:#f0f0f0"></div><div class="abs" style="left:0;top:0;width:17.8px;height:260px;background:#f0f0f0"></div><div class="abs" style="left:19.00px;top:21.50px;width:200px;height:20.4px;background:#0078d7"></div><div class="abs" style="left:18.40px;top:0;width:1px;height:260px;background:#7a7a7a"></div><div class="abs" style="left:61.20px;top:0;width:1px;height:260px;background:#d4d4d4"></div><div class="abs" style="left:78.60px;top:0;width:1px;height:260px;background:#d4d4d4"></div><div class="abs" style="left:98.70px;top:0;width:1px;height:260px;background:#d4d4d4"></div><div class="abs" style="left:150.60px;top:0;width:1px;height:260px;background:#d4d4d4"></div><div class="abs" style="left:170.60px;top:0;width:1px;height:260px;background:#d4d4d4"></div><div class="abs" style="left:193.70px;top:0;width:1px;height:260px;background:#d4d4d4"></div><div class="abs" style="left:18.50px;top:21.00px;width:220px;height:1px;background:#d4d4d4"></div><div class="abs" style="left:0;top:20.3px;width:17.8px;height:1px;background:#8a8a8a"></div><div class="abs" style="left:18.50px;top:41.90px;width:220px;height:1px;background:#d4d4d4"></div><div class="abs" style="left:0;top:41.2px;width:17.8px;height:1px;background:#8a8a8a"></div><div class="abs" style="left:18.50px;top:62.80px;width:220px;height:1px;background:#d4d4d4"></div><div class="abs" style="left:0;top:62.1px;width:17.8px;height:1px;background:#8a8a8a"></div><div class="abs" style="left:18.50px;top:83.70px;width:220px;height:1px;background:#d4d4d4"></div><div class="abs" style="left:0;top:83.0px;width:17.8px;height:1px;background:#8a8a8a"></div><div class="abs" style="left:18.50px;top:104.60px;width:220px;height:1px;background:#d4d4d4"></div><div class="abs" style="left:0;top:103.9px;width:17.8px;height:1px;background:#8a8a8a"></div><div class="abs" style="left:18.50px;top:125.50px;width:220px;height:1px;background:#d4d4d4"></div><div class="abs" style="left:0;top:124.8px;width:17.8px;height:1px;background:#8a8a8a"></div><div class="abs" style="left:18.50px;top:146.40px;width:220px;height:1px;background:#d4d4d4"></div><div class="abs" style="left:0;top:145.7px;width:17.8px;height:1px;background:#8a8a8a"></div><div class="abs" style="left:18.50px;top:167.30px;width:220px;height:1px;background:#d4d4d4"></div><div class="abs" style="left:0;top:166.6px;width:17.8px;height:1px;background:#8a8a8a"></div><div class="abs" style="left:18.50px;top:188.20px;width:220px;height:1px;background:#d4d4d4"></div><div class="abs" style="left:0;top:187.5px;width:17.8px;height:1px;background:#8a8a8a"></div><div class="abs" style="left:18.50px;top:209.10px;width:220px;height:1px;background:#d4d4d4"></div><div class="abs" style="left:0;top:208.4px;width:17.8px;height:1px;background:#8a8a8a"></div><div class="abs" style="left:18.50px;top:230.00px;width:220px;height:1px;background:#d4d4d4"></div><div class="abs" style="left:0;top:229.3px;width:17.8px;height:1px;background:#8a8a8a"></div><div class="abs" style="left:18.50px;top:250.90px;width:220px;height:1px;background:#d4d4d4"></div><div class="abs" style="left:0;top:250.2px;width:17.8px;height:1px;background:#8a8a8a"></div><div class="abs" style="left:0;top:20.3px;width:1.500px;height:20.9px;background:#444"></div><div class="t ct" style="left:22.70px;top:6.85px;font-size:9px">螺纹规格</div><div class="t ct" style="left:65.70px;top:6.85px;font-size:9.500px">d</div><div class="t ct" style="left:83.20px;top:6.85px;font-size:9.500px">dp</div><div class="t ct" style="left:102.50px;top:6.85px;font-size:9.500px">ds?</div><div class="t ct" style="left:155.20px;top:6.85px;font-size:9.500px">n</div><div class="t ct" style="left:174.70px;top:6.85px;font-size:9.500px">d1?</div><div class="t ct" style="left:197.70px;top:6.85px;font-size:9.500px">L2</div><div class="t ct" style="left:5.20px;top:25.95px">1</div><div class="t ct" style="left:22.20px;top:25.95px;color:#fff">M6</div><div class="t ct" style="left:65.20px;top:25.95px;color:#fff">6</div><div class="t ct" style="left:82.70px;top:25.95px;color:#fff">4</div><div class="t ct" style="left:102.00px;top:25.95px;color:#fff">6.964~7</div><div class="t ct" style="left:154.70px;top:25.95px;color:#fff">4.5</div><div class="t ct" style="left:174.20px;top:25.95px;color:#fff">1.6</div><div class="t ct" style="left:197.20px;top:25.95px;color:#fff">1.5</div><div class="t ct" style="left:5.20px;top:46.85px">2</div><div class="t ct" style="left:22.20px;top:46.85px;color:#1a1a1a">M8</div><div class="t ct" style="left:65.20px;top:46.85px;color:#1a1a1a">8</div><div class="t ct" style="left:82.70px;top:46.85px;color:#1a1a1a">5.5</div><div class="t ct" style="left:102.00px;top:46.85px;color:#1a1a1a">8.964~9</div><div class="t ct" style="left:154.70px;top:46.85px;color:#1a1a1a">5.5</div><div class="t ct" style="left:174.20px;top:46.85px;color:#1a1a1a">2</div><div class="t ct" style="left:197.20px;top:46.85px;color:#1a1a1a">1.5</div><div class="t ct" style="left:5.20px;top:67.75px">3</div><div class="t ct" style="left:22.20px;top:67.75px;color:#1a1a1a">M10</div><div class="t ct" style="left:65.20px;top:67.75px;color:#1a1a1a">10</div><div class="t ct" style="left:82.70px;top:67.75px;color:#1a1a1a">7</div><div class="t ct" style="left:102.00px;top:67.75px;color:#1a1a1a">10.957~11</div><div class="t ct" style="left:154.70px;top:67.75px;color:#1a1a1a">6</div><div class="t ct" style="left:174.20px;top:67.75px;color:#1a1a1a">2.5</div><div class="t ct" style="left:197.20px;top:67.75px;color:#1a1a1a">2</div><div class="t ct" style="left:5.20px;top:88.65px">4</div><div class="t ct" style="left:22.20px;top:88.65px;color:#1a1a1a">M12</div><div class="t ct" style="left:65.20px;top:88.65px;color:#1a1a1a">12</div><div class="t ct" style="left:82.70px;top:88.65px;color:#1a1a1a">8.5</div><div class="t ct" style="left:102.00px;top:88.65px;color:#1a1a1a">12.957~13</div><div class="t ct" style="left:154.70px;top:88.65px;color:#1a1a1a">7</div><div class="t ct" style="left:174.20px;top:88.65px;color:#1a1a1a">3.2</div><div class="t ct" style="left:197.20px;top:88.65px;color:#1a1a1a">2</div><div class="t ct" style="left:5.20px;top:109.55px">5</div><div class="t ct" style="left:22.20px;top:109.55px;color:#1a1a1a">(M14)</div><div class="t ct" style="left:65.20px;top:109.55px;color:#1a1a1a">14</div><div class="t ct" style="left:82.70px;top:109.55px;color:#1a1a1a">10</div><div class="t ct" style="left:102.00px;top:109.55px;color:#1a1a1a">14.957~15</div><div class="t ct" style="left:154.70px;top:109.55px;color:#1a1a1a">8</div><div class="t ct" style="left:174.20px;top:109.55px;color:#1a1a1a">3.2</div><div class="t ct" style="left:197.20px;top:109.55px;color:#1a1a1a">3</div><div class="t ct" style="left:5.20px;top:130.45px">6</div><div class="t ct" style="left:22.20px;top:130.45px;color:#1a1a1a">M16</div><div class="t ct" style="left:65.20px;top:130.45px;color:#1a1a1a">16</div><div class="t ct" style="left:82.70px;top:130.45px;color:#1a1a1a">12</div><div class="t ct" style="left:102.00px;top:130.45px;color:#1a1a1a">16.957~17</div><div class="t ct" style="left:154.70px;top:130.45px;color:#1a1a1a">9</div><div class="t ct" style="left:174.20px;top:130.45px;color:#1a1a1a">4</div><div class="t ct" style="left:197.20px;top:130.45px;color:#1a1a1a">3</div><div class="t ct" style="left:5.20px;top:151.35px">7</div><div class="t ct" style="left:22.20px;top:151.35px;color:#1a1a1a">(M18)</div><div class="t ct" style="left:65.20px;top:151.35px;color:#1a1a1a">18</div><div class="t ct" style="left:82.70px;top:151.35px;color:#1a1a1a">13</div><div class="t ct" style="left:102.00px;top:151.35px;color:#1a1a1a">18.948~19</div><div class="t ct" style="left:154.70px;top:151.35px;color:#1a1a1a">9</div><div class="t ct" style="left:174.20px;top:151.35px;color:#1a1a1a">4</div><div class="t ct" style="left:197.20px;top:151.35px;color:#1a1a1a">3</div><div class="t ct" style="left:5.20px;top:172.25px">8</div><div class="t ct" style="left:22.20px;top:172.25px;color:#1a1a1a">M20</div><div class="t ct" style="left:65.20px;top:172.25px;color:#1a1a1a">20</div><div class="t ct" style="left:82.70px;top:172.25px;color:#1a1a1a">15</div><div class="t ct" style="left:102.00px;top:172.25px;color:#1a1a1a">20.948~21</div><div class="t ct" style="left:154.70px;top:172.25px;color:#1a1a1a">10</div><div class="t ct" style="left:174.20px;top:172.25px;color:#1a1a1a">4</div><div class="t ct" style="left:197.20px;top:172.25px;color:#1a1a1a">4</div><div class="t ct" style="left:5.20px;top:193.15px">9</div><div class="t ct" style="left:22.20px;top:193.15px;color:#1a1a1a">(M22)</div><div class="t ct" style="left:65.20px;top:193.15px;color:#1a1a1a">22</div><div class="t ct" style="left:82.70px;top:193.15px;color:#1a1a1a">17</div><div class="t ct" style="left:102.00px;top:193.15px;color:#1a1a1a">22.948~23</div><div class="t ct" style="left:154.70px;top:193.15px;color:#1a1a1a">11</div><div class="t ct" style="left:174.20px;top:193.15px;color:#1a1a1a">5</div><div class="t ct" style="left:197.20px;top:193.15px;color:#1a1a1a">4</div><div class="t ct" style="left:3.70px;top:214.05px">10</div><div class="t ct" style="left:22.20px;top:214.05px;color:#1a1a1a">M24</div><div class="t ct" style="left:65.20px;top:214.05px;color:#1a1a1a">24</div><div class="t ct" style="left:82.70px;top:214.05px;color:#1a1a1a">18</div><div class="t ct" style="left:102.00px;top:214.05px;color:#1a1a1a">24.948~25</div><div class="t ct" style="left:154.70px;top:214.05px;color:#1a1a1a">11</div><div class="t ct" style="left:174.20px;top:214.05px;color:#1a1a1a">5</div><div class="t ct" style="left:197.20px;top:214.05px;color:#1a1a1a">4</div><div class="t ct" style="left:3.70px;top:234.95px">11</div><div class="t ct" style="left:22.20px;top:234.95px;color:#1a1a1a">(M27)</div><div class="t ct" style="left:65.20px;top:234.95px;color:#1a1a1a">27</div><div class="t ct" style="left:82.70px;top:234.95px;color:#1a1a1a">21</div><div class="t ct" style="left:102.00px;top:234.95px;color:#1a1a1a">27.948~28</div><div class="t ct" style="left:154.70px;top:234.95px;color:#1a1a1a">13</div><div class="t ct" style="left:174.20px;top:234.95px;color:#1a1a1a">6.3</div><div class="t ct" style="left:197.20px;top:234.95px;color:#1a1a1a">5</div></div>
  <div class="abs" style="left:234.30px;top:72.30px;width:1.500px;height:156.8px;background:#8a8a8a;border-radius:1px"></div>
  <div class="abs" style="left:32.70px;top:311.20px;width:105.6px;height:1.500px;background:#8a8a8a;border-radius:1px"></div>
  <!-- preview -->
  <div class="abs" id="prev1" style="left:254.4px;top:58.2px;width:239.3px;height:237.3px;background:#000"><svg class="abs" style="left:0;top:0" width="239.300" height="237.300" viewBox="649.400 154.200 239.300 237.300"><path d="M704.500 184.400H720q1.500 0 1.500 1.500V238q0 1.500-1.500 1.500H704.500q-1.500 0-1.500-1.500V186q0-1.600 1.500-1.600zM703 197.600H721.500M703 224.700H721.500" fill="none" stroke="#f2f2f2" stroke-width="1"/><path d="M721.500 194.800H756.700V229.100H721.500" fill="none" stroke="#f2f2f2" stroke-width="1"/><path d="M757.600 195.800H803.400V228.200H757.600zM757.600 197.900H803.400M757.600 226H803.400M803.400 199.300H810V224.400H803.400" fill="none" stroke="#f2f2f2" stroke-width="1"/><path d="M697.800 211.800H815.500" stroke="#c01818" stroke-width="1" stroke-dasharray="7 2 2 2"/><path d="M721.500 194.400L739.400 172.800M780.900 223.500L801.700 188.400M744.500 195.800V227.700M803.400 196.200H841.500M803.400 228.200H841.500M810 199.600H826.800M810 224.400H826.800M823.300 199.600V224.400M837.200 196.200V228.200M703.500 239.500V269.800M721.500 239.500V269.800M810 224.400V269.800M703.500 265.100H810M758.400 228.200V255M803.400 228.200V255M758.400 251.200H803.400M787.300 220V245M777.400 241.700H813.800M793 247.300H819.900" fill="none" stroke="#12c812" stroke-width="1"/><g fill="#12c812" style="font-family:&quot;Liberation Sans&quot;,sans-serif;font-size:5px"><text x="738.8" y="173">r</text><text x="711" y="264.3">k</text><text x="765" y="264.3">l</text><text x="779.5" y="250.4">l3</text><text x="794.5" y="240.9">l2</text><text x="805" y="246.6">lh</text><text x="744" y="374.7">s</text><text x="743.3" y="214" transform="rotate(-90 743.3 214)">ds</text><text x="822.2" y="214" transform="rotate(-90 822.2 214)">dp</text><text x="836" y="213" transform="rotate(-90 836 213)">d</text><text x="797.5" y="191" transform="rotate(-58 797.5 191)">d1</text></g><circle cx="787.300" cy="211.800" r="2.800" fill="none" stroke="#f2f2f2" stroke-width="1"/><path d="M787.300 202.700V220" stroke="#c01818" stroke-width="1"/><polygon points="745.2,281.3 768.8,295.0 768.8,322.2 745.2,335.9 721.6,322.3 721.6,295.0" fill="none" stroke="#f2f2f2" stroke-width="1"/><circle cx="745.2" cy="308.6" r="23.400" fill="none" stroke="#f2f2f2" stroke-width="1"/><path d="M716.600 308.6H773.500M745.2 276.300V340.700" stroke="#c01818" stroke-width="1" stroke-dasharray="7 2 2 2"/><path d="M721.100 322.300V378.600M768.800 322.300V378.600M721.100 375.500H768.800" fill="none" stroke="#12c812" stroke-width="1"/></svg></div>
  <!-- group box -->
  <div class="abs" style="left:33px;top:330px;width:191.600px;height:71.500px;border:1px solid #dcdcdc"></div>
  <div class="t" style="left:37.300px;top:326px;font-size:9px;color:#111;background:#f0f0f0;padding:0 2px">尺寸开关</div>
  <div class="abs" style="left:45.2px;top:344.2px;width:9.600px;height:9.600px;border-radius:50%;background:#0067c0"></div><div class="abs" style="left:47.8px;top:346.8px;width:4.400px;height:4.400px;border-radius:50%;background:#fff"></div><div class="abs" style="left:45.2px;top:363.4px;width:9.600px;height:9.600px;border-radius:50%;background:#f7f7f7;border:1px solid #7c7c7c"></div><div class="abs" style="left:45.2px;top:381.9px;width:9.600px;height:9.600px;border-radius:50%;background:#f7f7f7;border:1px solid #7c7c7c"></div>
  <div class="t" style="left:57.3px;top:344.5px;font-size:9px;color:#111">关</div>
  <div class="t" style="left:57.3px;top:363.7px;font-size:9px;color:#111">尺寸值</div>
  <div class="t" style="left:57.300px;top:382.800px;font-size:9px;color:#111">尺寸变量</div>
  <div class="t" style="left:22.800px;top:414.400px;font-size:9px;color:#111">图符比例:</div>
  <div class="abs" style="left:77px;top:409.2px;width:63px;height:18.500px;background:#fff;border:1px solid #9a9a9a;border-radius:1.500px"></div>
  <div class="t" style="left:80.3px;top:413.6px;font-size:9.500px;color:#111">1:1</div>
  <svg class="abs" style="left:130px;top:416.5px" width="7" height="5" viewBox="0 0 7 5"><path d="M0.500 0.800l3 3 3-3" fill="none" stroke="#555" stroke-width="0.900"/></svg>
  <div class="abs" style="left:285px;top:381.4px;width:9.500px;height:9.500px;border-radius:2px;background:#0067c0"></div><svg class="abs" style="left:285px;top:381.4px" width="9.500" height="9.500" viewBox="0 0 9.500 9.500"><path d="M2.500 4.900l1.600 1.600 3-3.200" fill="none" stroke="#fff" stroke-width="0.900"/></svg><div class="t" style="left:297.3px;top:381.6px;font-size:9.500px;color:#1a1a1a">1</div><div class="abs" style="left:312px;top:381.4px;width:9.500px;height:9.500px;border-radius:2px;background:#0067c0"></div><svg class="abs" style="left:312px;top:381.4px" width="9.500" height="9.500" viewBox="0 0 9.500 9.500"><path d="M2.500 4.900l1.600 1.600 3-3.200" fill="none" stroke="#fff" stroke-width="0.900"/></svg><div class="t" style="left:324.2px;top:381.6px;font-size:9.500px;color:#1a1a1a">2</div><div class="abs" style="left:338.4px;top:381.4px;width:9.500px;height:9.500px;border-radius:2px;background:#fafafa;border:1px solid #c6c6c6"></div><div class="t" style="left:350.4px;top:381.6px;font-size:9.500px;color:#8a8a8a">3</div><div class="abs" style="left:366.2px;top:381.4px;width:9.500px;height:9.500px;border-radius:2px;background:#fafafa;border:1px solid #c6c6c6"></div><div class="t" style="left:378.2px;top:381.6px;font-size:9.500px;color:#8a8a8a">4</div><div class="abs" style="left:395.3px;top:381.4px;width:9.500px;height:9.500px;border-radius:2px;background:#fafafa;border:1px solid #c6c6c6"></div><div class="t" style="left:407.7px;top:381.6px;font-size:9.500px;color:#8a8a8a">5</div><div class="abs" style="left:422.3px;top:381.4px;width:9.500px;height:9.500px;border-radius:2px;background:#fafafa;border:1px solid #c6c6c6"></div><div class="t" style="left:434.4px;top:381.6px;font-size:9.500px;color:#8a8a8a">6</div>
  <div class="abs" style="left:8.5px;top:448.800px;width:491.2px;height:1px;background:#cfcfcf"></div>
  <div class="abs" style="left:8.5px;top:449.800px;width:491.2px;height:1px;background:#f8f8f8"></div>
  <div class="abs btn" style="left:295.5px;top:464.900px;width:64px;background:#f6f6f6;border-color:#ececec;color:#9a9a9a">&lt; 上一步(<u>B</u>)</div>
  <div class="abs btn" style="left:361.3px;top:464.900px;width:64.600px;border:1.200px solid #0067c0">完成</div>
  <div class="abs btn" style="left:436.4px;top:464.900px;width:64.200px">取消</div>
  <svg class="abs" style="left:501px;top:487px" width="7" height="7" viewBox="0 0 7 7"><path d="M5.500 1.500h1M5.500 3.500h1M3.500 3.500h1M5.500 5.500h1M3.500 5.500h1M1.500 5.500h1" stroke="#b8b8b8" stroke-width="1"/></svg>
</div>
</body>
</html>
